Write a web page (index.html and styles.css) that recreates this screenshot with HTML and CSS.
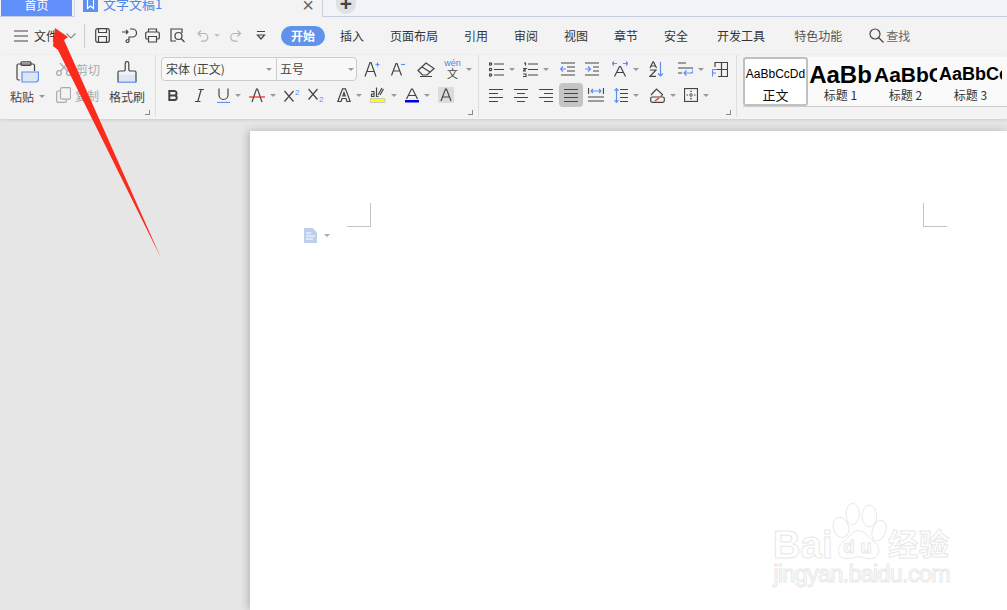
FILE: index.html
```html
<!DOCTYPE html>
<html lang="zh-CN">

<head>
    <meta charset="UTF-8">
    <title>文字文稿1</title>
    <link rel="stylesheet" href="styles.css">
</head>

<body>
    <!-- Icon sprites -->
    <svg class="sprites" width="0" height="0">
        <symbol id="i-menu" viewBox="0 0 14 12"><path d="M0 1h14M0 6h14M0 11h14"/></symbol>
        <symbol id="i-chev" viewBox="0 0 10 6"><path d="M.5.5 5 5 9.500.5"/></symbol>
        <symbol id="i-save" viewBox="0 0 15 15"><rect x=".7" y=".7" width="13.600" height="13.600" rx="2"/><path d="M3.500 1v3.500h8V1M3.500 14V8.500h8V14"/></symbol>
        <symbol id="i-smart" viewBox="0 0 15 15"><path d="M0 4h6M4 2l2 2-2 2M8 1h2.500a3.500 3.500 0 0 1 0 8H7v4a1.500 1.500 0 1 1-3 0c0-1 1-1.500 3-1.500"/></symbol>
        <symbol id="i-print" viewBox="0 0 15 15"><path d="M3.500 4V1h8v3M3.500 11H2a1.300 1.300 0 0 1-1.300-1.300V5.300A1.300 1.300 0 0 1 2 4h11a1.300 1.300 0 0 1 1.300 1.300v4.400A1.300 1.300 0 0 1 13 11h-1.500M3.500 8.500h8V14h-8z"/></symbol>
        <symbol id="i-preview" viewBox="0 0 15 15"><path d="M6 13H1V1h11v4"/><circle cx="8.500" cy="8" r="3.500"/><path d="m11 10.500 3.500 3.500"/></symbol>
        <symbol id="i-undo" viewBox="0 0 12 12"><path d="M4 .5 1 3.500l3 3M1 3.500h6a3.800 3.800 0 0 1 0 7.600H4"/></symbol>
        <symbol id="i-redo" viewBox="0 0 12 12"><path d="m8 .5 3 3-3 3M11 3.500H5a3.800 3.800 0 0 0 0 7.600h3"/></symbol>
        <symbol id="i-more" viewBox="0 0 10 9"><path d="M1 .5h8M1.500 4 5 8l3.500-4z"/></symbol>
        <symbol id="i-search" viewBox="0 0 15 15"><circle cx="6" cy="6" r="5"/><path d="m9.500 9.500 5 5"/></symbol>
        <symbol id="i-doc-tab" viewBox="0 0 15 16"><rect width="15" height="16" fill="#5b8ff0" stroke="none"/><path d="M4.500 2.500h6v10l-3-2.500-3 2.500z" stroke="#fff"/></symbol>
        <symbol id="i-paste" viewBox="0 0 23 22">
            <path d="M4 19H2.500A1.500 1.500 0 0 1 1 17.500v-13A1.500 1.500 0 0 1 2.500 3H17a1.500 1.500 0 0 1 1.500 1.500V10"/>
            <rect x="5" y=".8" width="10" height="3.500" rx="1"/>
            <path d="M6 11h16.500v7a3 3 0 0 1-3 3H6z" fill="#dfe6f3" stroke="#5b8ff0"/>
        </symbol>
        <symbol id="i-cut" viewBox="0 0 16 13"><circle cx="3" cy="10" r="2.400"/><circle cx="13" cy="10" r="2.400"/><path d="M4.500 8 12 0M11.500 8 4 0"/></symbol>
        <symbol id="i-copy" viewBox="0 0 15 16"><rect x="4.500" y=".7" width="10" height="11.500" rx="1.500"/><path d="M4 4H2A1.300 1.300 0 0 0 .7 5.300v9A1.300 1.300 0 0 0 2 15.300h7a1.300 1.300 0 0 0 1.300-1.300v-1.500"/></symbol>
        <symbol id="i-brush" viewBox="0 0 20 22">
            <path d="M1 13.500h18V21H1z" fill="#dfe6f3" stroke="none"/>
            <path d="M1 21V11.500a1.500 1.500 0 0 1 1.500-1.500H7a1.500 1.500 0 0 0 1.200-1.500V2.500a1.800 1.800 0 0 1 3.600 0v6A1.500 1.500 0 0 0 13 10h4.500a1.500 1.500 0 0 1 1.500 1.500V21"/>
            <path d="M.5 21.200h19" stroke="#5b8ff0"/>
        </symbol>
        <symbol id="i-aplus" viewBox="0 0 16 16"><path d="m1 15.500 5-14h1l5 14M3 10.500h7"/><path d="M11.500 3.500h4M13.500 1.500v4" stroke="#5b8ff0"/></symbol>
        <symbol id="i-aminus" viewBox="0 0 14 14"><path d="m.5 13.500 4.500-12h1l4.500 12M2.500 9h6.500"/><path d="M10 2.500h4" stroke="#5b8ff0"/></symbol>
        <symbol id="i-eraser" viewBox="0 0 18 15"><path d="M1 8.500 9 1l8 5.500-7 6.500H5.500z"/><path d="M5 5l8 5M3 14.500h12"/></symbol>
        <symbol id="i-bold" viewBox="0 0 11 11"><path d="M1.300 1h5a2.200 2.200 0 0 1 0 4.500h-5zm0 4.500h5.700a2.300 2.300 0 0 1 0 4.500H1.300z" stroke-width="2"/></symbol>
        <symbol id="i-italic" viewBox="0 0 9 13"><path d="M3.500.5H9M0 12.500h5.500M6.200.5l-3.400 12"/></symbol>
        <symbol id="i-under" viewBox="0 0 13 15"><path d="M2 .5v6.500a4.500 4.500 0 0 0 9 0V.5"/><path d="M0 14.500h13" stroke="#5b8ff0"/></symbol>
        <symbol id="i-strike" viewBox="0 0 16 15"><path d="m3 14 4.500-13h1L13 14"/><path d="M0 9h16" stroke="#e02b2b"/></symbol>
        <symbol id="i-sup" viewBox="0 0 16 14"><path d="m.5 3 9 10.500M9.500 3l-9 10.500"/><text x="11" y="6.500" class="sub-digit">2</text></symbol>
        <symbol id="i-sub" viewBox="0 0 16 14"><path d="m.5 1 9 10.500M9.500 1l-9 10.500"/><text x="11" y="14" class="sub-digit">2</text></symbol>
        <symbol id="i-aout" viewBox="0 0 14 14"><path d="M.8 13.500 5.500.8h3l4.700 12.700H10L9 10.500H5L4 13.500zM5.800 8h2.400L7 4.500z"/></symbol>
        <symbol id="i-mark" viewBox="0 0 16 16"><path d="M12 1 8 8M13.500 2 10 8" stroke="#444"/><rect y="11.500" width="15" height="4" rx="1" fill="#ffff00" stroke="#c9c9c9"/><path d="M1 4.500h3v5M1.500 7h2.500v2.500H1.500zM6.500.5v9h2" stroke="#444"/></symbol>
        <symbol id="i-color" viewBox="0 0 14 15"><path d="m1.500 11 5-10h1l5 10M3.500 7.500h7"/><rect y="12" width="14" height="2.500" fill="#0000e0" stroke="none"/></symbol>
        <symbol id="i-shade" viewBox="0 0 16 16"><rect width="16" height="16" fill="#dcdcdc" stroke="none"/><path d="m3 14 4.500-12h1L13 14M5 10h6"/></symbol>
        <symbol id="i-bul" viewBox="0 0 15 15"><circle cx="1.500" cy="2" r="1.200"/><circle cx="1.500" cy="7.500" r="1.200"/><circle cx="1.500" cy="13" r="1.200"/><path d="M5 2h10M5 7.500h10M5 13h10"/></symbol>
        <symbol id="i-num" viewBox="0 0 15 15"><path d="M1 1h1.500v2.500M0 6.500h3L0 9h3M0 12h3v2.500H0M5 2h10M5 7.500h10M5 13h10"/></symbol>
        <symbol id="i-dedent" viewBox="0 0 15 14"><path d="M1 1h14M7 5h8M7 9h8M1 13h14"/><path d="M6 7H.5M3 4.500.5 7 3 9.500" stroke="#5b8ff0"/></symbol>
        <symbol id="i-indent" viewBox="0 0 15 14"><path d="M0 1h14M8 5h6M8 9h6M0 13h14"/><path d="M0 7h5.500M3 4.500 5.500 7 3 9.500" stroke="#5b8ff0"/></symbol>
        <symbol id="i-ascale" viewBox="0 0 16 16"><path d="m2.500 15.500 5-10h1l5 10M4.500 11.500h7"/><path d="M0 2.500h5M2 .5l-2 2 2 2M11 2.500h5M14 .5l2 2-2 2" stroke="#5b8ff0"/></symbol>
        <symbol id="i-sort" viewBox="0 0 15 16"><path d="M1 7 4 .8h.5L7.500 7M2 5h5M1 9h6L1 15.300h6"/><path d="M11.500 1v14M9 12.500l2.500 2.500 2.500-2.500" stroke="#5b8ff0"/></symbol>
        <symbol id="i-wrap" viewBox="0 0 15 14"><path d="M0 1h8M0 6h15M0 11h4"/><path d="M15 6v3a2 2 0 0 1-2 2H6M8.500 8.500 6 11l2.500 2.500" stroke="#5b8ff0"/></symbol>
        <symbol id="i-tbl" viewBox="0 0 16 15"><path d="M3 5V.5h12.500v14H6M9.500 .5v14M3 7.500h12.500"/><path d="M.5 7.500v7M.5 7.500H5M.5 11H4" stroke="#5b8ff0"/></symbol>
        <symbol id="i-left" viewBox="0 0 14 13"><path d="M0 .5h14M0 4.500h9M0 8.500h14M0 12.500h9"/></symbol>
        <symbol id="i-center" viewBox="0 0 14 13"><path d="M0 .5h14M3 4.500h8M0 8.500h14M3 12.500h8"/></symbol>
        <symbol id="i-right" viewBox="0 0 14 13"><path d="M0 .5h14M5 4.500h9M0 8.500h14M5 12.500h9"/></symbol>
        <symbol id="i-just" viewBox="0 0 14 13"><path d="M0 .5h14M0 4.500h14M0 8.500h14M0 12.500h14"/></symbol>
        <symbol id="i-dist" viewBox="0 0 16 14"><path d="M0 9h16M0 13h16M.5 0v6M15.500 0v6"/><path d="M3 3h10M5 1 3 3l2 2M11 1l2 2-2 2" stroke="#5b8ff0"/></symbol>
        <symbol id="i-space" viewBox="0 0 14 15"><path d="M6 1.500h8M6 5.500h8M6 9.500h8M6 13.500h8"/><path d="M2.500 .5v14M.5 3l2-2.500L4.500 3M.5 12l2 2.500 2-2.500" stroke="#5b8ff0"/></symbol>
        <symbol id="i-fill" viewBox="0 0 15 15"><path d="M1 7 6.500 1l6 5.500-1.500 2"/><rect x=".7" y="9" width="13.600" height="5.300" rx="1.500"/><path d="m5 13 4-3" stroke="#e02b2b"/></symbol>
        <symbol id="i-border" viewBox="0 0 14 14"><rect x=".5" y=".5" width="13" height="13"/><path d="M7 2.500v9M2.500 7h9" stroke-dasharray="1.500 1"/></symbol>
        <symbol id="i-para" viewBox="0 0 13 15"><path d="M0 0h8.500L13 4.500V15H0z" fill="#bcd0ee" stroke="none"/><path d="M2 5h5M2 8h9M2 11h7" stroke="#fff"/></symbol>
    </svg>

    <!-- Tabs -->
    <div class="tabbar">
        <div class="tab-home">首页</div>
        <div class="tab-doc">
            <svg class="ic doc-mark" width="15" height="16"><use href="#i-doc-tab"/></svg>
            <span class="doc-name">文字文稿1</span>
            <span class="doc-close">&times;</span>
        </div>
        <div class="tab-add">+</div>
    </div>

    <!-- Menu row -->
    <div class="menubar">
        <svg class="ic" width="14" height="12"><use href="#i-menu"/></svg>
        <span class="file-btn">文件</span>
        <svg class="ic chev" width="10" height="6"><use href="#i-chev"/></svg>
        <i class="vline"></i>
        <div class="qat">
            <svg class="ic" width="15" height="15"><use href="#i-save"/></svg>
            <svg class="ic" width="15" height="15"><use href="#i-smart"/></svg>
            <svg class="ic" width="15" height="15"><use href="#i-print"/></svg>
            <svg class="ic" width="15" height="15"><use href="#i-preview"/></svg>
            <div class="tool dim"><svg class="ic" width="12" height="12"><use href="#i-undo"/></svg><i class="caret"></i></div>
            <svg class="ic dim" width="13" height="12"><use href="#i-redo"/></svg>
            <svg class="ic" width="10" height="9"><use href="#i-more"/></svg>
        </div>
        <nav class="menu-tabs">
            <span class="pill">开始</span>
            <span>插入</span>
            <span>页面布局</span>
            <span>引用</span>
            <span>审阅</span>
            <span>视图</span>
            <span>章节</span>
            <span>安全</span>
            <span class="wide">开发工具</span>
            <span class="wide">特色功能</span>
            <span class="find">
                <svg class="ic" width="15" height="15"><use href="#i-search"/></svg>
                查找
            </span>
        </nav>
    </div>

    <!-- Ribbon -->
    <div class="ribbon">
        <section class="group clip">
            <div class="big-btn paste-btn">
                <svg class="ic" width="23" height="22"><use href="#i-paste"/></svg>
                <span class="tool">粘贴<i class="caret"></i></span>
            </div>
            <div class="clip-small">
                <span class="small-btn"><svg class="ic" width="16" height="13"><use href="#i-cut"/></svg>剪切</span>
                <span class="small-btn"><svg class="ic" width="15" height="16"><use href="#i-copy"/></svg>复制</span>
            </div>
            <div class="big-btn painter-btn">
                <svg class="ic" width="20" height="22"><use href="#i-brush"/></svg>
                <span>格式刷</span>
            </div>
            <i class="launcher"></i>
        </section>

        <section class="group font">
            <div class="row">
                <div class="combo">
                    <span class="combo-face">宋体 (正文)<i class="caret"></i></span>
                    <span class="combo-size">五号<i class="caret"></i></span>
                </div>
                <div class="cells font-top">
                    <svg class="ic" width="16" height="16"><use href="#i-aplus"/></svg>
                    <svg class="ic" width="14" height="14"><use href="#i-aminus"/></svg>
                    <svg class="ic" width="18" height="15"><use href="#i-eraser"/></svg>
                    <div class="tool"><span class="pinyin"><b>wén</b>文</span><i class="caret"></i></div>
                </div>
            </div>
            <div class="cells row font-bottom">
                <svg class="ic" width="11" height="11"><use href="#i-bold"/></svg>
                <svg class="ic" width="9" height="13"><use href="#i-italic"/></svg>
                <div class="tool"><svg class="ic" width="13" height="15"><use href="#i-under"/></svg><i class="caret"></i></div>
                <div class="tool"><svg class="ic" width="16" height="15"><use href="#i-strike"/></svg><i class="caret"></i></div>
                <svg class="ic" width="16" height="14"><use href="#i-sup"/></svg>
                <svg class="ic" width="16" height="14"><use href="#i-sub"/></svg>
                <div class="tool"><svg class="ic" width="14" height="14"><use href="#i-aout"/></svg><i class="caret"></i></div>
                <div class="tool"><svg class="ic" width="16" height="16"><use href="#i-mark"/></svg><i class="caret"></i></div>
                <div class="tool"><svg class="ic" width="14" height="15"><use href="#i-color"/></svg><i class="caret"></i></div>
                <svg class="ic" width="16" height="16"><use href="#i-shade"/></svg>
            </div>
            <i class="launcher"></i>
        </section>

        <section class="group para">
            <div class="cells row para-top">
                <div class="tool"><svg class="ic" width="15" height="15"><use href="#i-bul"/></svg><i class="caret"></i></div>
                <div class="tool"><svg class="ic" width="15" height="15"><use href="#i-num"/></svg><i class="caret"></i></div>
                <svg class="ic" width="15" height="14"><use href="#i-dedent"/></svg>
                <svg class="ic" width="15" height="14"><use href="#i-indent"/></svg>
                <div class="tool"><svg class="ic" width="16" height="16"><use href="#i-ascale"/></svg><i class="caret"></i></div>
                <svg class="ic" width="15" height="16"><use href="#i-sort"/></svg>
                <div class="tool"><svg class="ic" width="15" height="14"><use href="#i-wrap"/></svg><i class="caret"></i></div>
                <svg class="ic" width="16" height="15"><use href="#i-tbl"/></svg>
            </div>
            <div class="cells row para-bottom">
                <svg class="ic" width="14" height="13"><use href="#i-left"/></svg>
                <svg class="ic" width="14" height="13"><use href="#i-center"/></svg>
                <svg class="ic" width="14" height="13"><use href="#i-right"/></svg>
                <div class="active-btn"><svg class="ic" width="14" height="13"><use href="#i-just"/></svg></div>
                <svg class="ic" width="16" height="14"><use href="#i-dist"/></svg>
                <div class="tool"><svg class="ic" width="14" height="15"><use href="#i-space"/></svg><i class="caret"></i></div>
                <div class="tool"><svg class="ic" width="15" height="15"><use href="#i-fill"/></svg><i class="caret"></i></div>
                <div class="tool"><svg class="ic" width="14" height="14"><use href="#i-border"/></svg><i class="caret"></i></div>
            </div>
            <i class="launcher"></i>
        </section>

        <section class="gallery">
            <div class="style-item selected"><span class="sample s-body">AaBbCcDd</span><span class="style-name name-body">正文</span></div>
            <div class="style-item"><span class="sample s-h1">AaBb</span><span class="style-name">标题 1</span></div>
            <div class="style-item"><span class="sample s-h2">AaBbC</span><span class="style-name">标题 2</span></div>
            <div class="style-item"><span class="sample s-h3">AaBbCc</span><span class="style-name">标题 3</span></div>
        </section>
    </div>

    <!-- Document area -->
    <main class="workspace">
        <div class="sheet">
            <i class="corner corner-l"></i>
            <i class="corner corner-r"></i>
            <div class="para-mark">
                <svg class="ic" width="13" height="15"><use href="#i-para"/></svg>
                <i class="caret"></i>
            </div>
        </div>
    </main>

    <!-- Baidu watermark -->
    <svg class="watermark" width="247" height="120" viewBox="0 0 741 360">
        <ellipse cx="278" cy="72" rx="20" ry="32"/>
        <ellipse cx="328" cy="78" rx="22" ry="33"/>
        <ellipse cx="243" cy="112" rx="23" ry="31" transform="rotate(-20 243 112)"/>
        <ellipse cx="357" cy="122" rx="20" ry="32" transform="rotate(20 357 122)"/>
        <path d="M295 122c-20 0-30 24-48 36-16 10-18 46 12 48 14 1 24-6 36-6s24 7 38 6c30-2 28-38 12-48-18-12-30-36-50-36z"/>
        <text x="38" y="204" class="wm-bai" textLength="180" lengthAdjust="spacingAndGlyphs">Bai</text>
        <text x="250" y="190" class="wm-du" textLength="85">du</text>
        <text x="384" y="196" class="wm-jy" textLength="182">经验</text>
        <text x="40" y="276" class="wm-url" textLength="532">jingyan.baidu.com</text>
    </svg>

    <!-- Red annotation arrow -->
    <svg class="arrow" width="170" height="265" viewBox="0 0 170 265">
        <polygon points="55,28 68,37 64,40 161,258 58,50 53,46"/>
    </svg>
</body>

</html>
```

FILE: styles.css
```css
* {
    box-sizing: border-box;
}

html, body {
    height: 100%;
    margin: 0;
}

body {
    position: relative;
    overflow: hidden;
    display: flex;
    flex-direction: column;
    background-color: #e6e6e6;
    color: #444;
    font-family: "Noto Sans CJK SC", "Liberation Sans", sans-serif;
    font-size: 12px;
}

.sprites {
    position: absolute;
}

.ic {
    display: block;
    flex: none;
    fill: none;
    stroke: #444;
    stroke-width: 1.2;
}

.sub-digit {
    fill: #5b8ff0;
    stroke: none;
    font-family: "Liberation Sans", sans-serif;
    font-size: 8px;
}

.caret {
    display: inline-block;
    flex: none;
    width: 0;
    height: 0;
    margin-left: 5px;
    border-top: 3px solid #999;
    border-left: 3px solid transparent;
    border-right: 3px solid transparent;
}

.tool {
    display: flex;
    align-items: center;
    white-space: nowrap;
}

.dim .ic,
.ic.dim {
    stroke: #b5b5b5;
}

.dim .caret {
    border-top-color: #c4c4c4;
}

/* Tabs */
.tabbar {
    flex: none;
    display: flex;
    height: 17px;
    padding-left: 1px;
    background-color: #f1f3f9;
    border-bottom: 1px solid #c6cde0;
}

.tab-home {
    width: 71px;
    height: 16px;
    background-color: #618ffb;
    color: #fff;
    font-size: 12px;
    line-height: 10px;
    text-align: center;
    overflow: hidden;
}

.tab-doc {
    display: flex;
    width: 249px;
    height: 17px;
    margin-left: 2px;
    padding-left: 8px;
    background-color: #f3f3f3;
    border-left: 1px solid #d5d9e6;
    border-right: 1px solid #c6cde0;
    overflow: hidden;
}

.doc-mark {
    margin-top: -4px;
}

.doc-name {
    margin-left: 5px;
    color: #4a86e8;
    font-size: 13px;
    line-height: 7px;
}

.doc-close {
    margin-left: auto;
    margin-right: 8px;
    color: #666;
    font-family: "Liberation Sans", sans-serif;
    font-size: 20px;
    line-height: 10px;
}

.tab-add {
    width: 20px;
    height: 14px;
    margin-left: 13px;
    background-color: #dfe0e4;
    border-radius: 0 0 10px 10px;
    color: #444;
    font-family: "Liberation Sans", sans-serif;
    font-size: 21px;
    font-weight: bold;
    line-height: 8px;
    text-align: center;
    overflow: hidden;
}

/* Menu row */
.menubar {
    flex: none;
    display: flex;
    align-items: center;
    height: 38px;
    padding: 0 0 1px 14px;
    background-color: #f3f3f3;
    color: #333;
}

.file-btn {
    margin-left: 6px;
    width: 32px;
}

.chev {
    stroke: #888;
}

.vline {
    width: 1px;
    height: 24px;
    margin-left: 8px;
    background-color: #ccc;
}

.qat {
    display: grid;
    grid-template-columns: 27px 23px 25px 27px 32px 27px 25px;
    align-items: center;
    margin-left: 10px;
}

.menu-tabs {
    display: flex;
    align-items: center;
    gap: 26px;
}

.pill {
    width: 44px;
    height: 20px;
    margin-right: -11px;
    background-color: #5f92ea;
    border-radius: 10px;
    color: #fff;
    font-weight: bold;
    line-height: 20px;
    text-align: center;
}

.wide {
    margin-left: 3px;
}

.find {
    display: flex;
    align-items: center;
    gap: 2px;
    margin-left: 1px;
    color: #666;
}

.wide + .wide {
    color: #555;
}

/* Ribbon */
.ribbon {
    flex: none;
    display: flex;
    height: 64px;
    background-color: #f3f3f3;
    box-shadow: 0 1px 3px rgba(0, 0, 0, 0.12);
}

.group {
    position: relative;
    height: 62px;
    border-right: 1px solid #dedede;
}

.launcher {
    position: absolute;
    right: 5px;
    bottom: 2px;
    width: 5px;
    height: 5px;
    border-right: 1px solid #888;
    border-bottom: 1px solid #888;
}

.row {
    display: flex;
    align-items: center;
    height: 26px;
}

.cells {
    display: grid;
    align-items: center;
}

/* Clipboard group */
.clip {
    display: flex;
    width: 156px;
    padding-left: 11px;
}

.big-btn {
    display: flex;
    flex-direction: column;
    align-items: center;
    padding-top: 6px;
    white-space: nowrap;
}

.big-btn > span {
    margin-top: 5px;
    line-height: 17px;
}

.paste-btn {
    width: 32px;
    padding-left: 1px;
}

.clip-small {
    margin-left: 13px;
    width: 53px;
    padding-top: 1px;
}

.small-btn {
    display: flex;
    align-items: center;
    gap: 4px;
    height: 26px;
    color: #aaa;
}

.small-btn .ic {
    stroke: #aaa;
}

.painter-btn {
    width: 36px;
}

/* Font group */
.font {
    width: 323px;
    padding: 1px 0 0 5px;
}

.combo {
    display: flex;
    width: 196px;
    height: 24px;
    background-color: #f8f8f8;
    border: 1px solid #ccc;
    border-radius: 4px;
    line-height: 22px;
}

.combo-face,
.combo-size {
    display: flex;
    align-items: center;
    justify-content: space-between;
    padding: 0 4px;
}

.combo-face {
    width: 115px;
    border-right: 1px solid #ccc;
}

.combo-size {
    flex: 1;
    padding-right: 2px;
    padding-left: 3px;
}

.font-top {
    grid-template-columns: 27px 26px 27px auto;
    margin-left: 7px;
}

.pinyin {
    display: block;
    width: 17px;
    font-size: 11px;
    line-height: 11px;
    text-align: center;
}

.pinyin b {
    display: block;
    color: #4a86e8;
    font-size: 9px;
    font-weight: normal;
    font-family: "Liberation Sans", sans-serif;
    line-height: 9px;
}

.font-bottom {
    grid-template-columns: 27px 22px 32px 35px 24px 29px 33px 35px 33px auto;
    padding-left: 7px;
}

/* Paragraph group */
.para {
    width: 258px;
    padding: 1px 0 0 10px;
}

.para-top {
    grid-template-columns: 34px 37px 25px 27px 37px 29px 34px auto;
}

.para-bottom {
    grid-template-columns: 25px 25px 20px 29px 26px 36px 34px auto;
}

.active-btn {
    display: flex;
    align-items: center;
    justify-content: center;
    width: 24px;
    height: 24px;
    background-color: #c4c4c4;
    border-radius: 4px;
}

/* Style gallery */
.gallery {
    display: flex;
    flex: 1;
    height: 50px;
    margin: 2px 0 0 6px;
    background-color: #fafafa;
    border-bottom: 1px solid #ccc;
    overflow: hidden;
}

.style-item {
    display: flex;
    flex-direction: column;
    align-items: center;
    width: 65px;
    flex: none;
    color: #333;
    overflow: hidden;
}

.selected {
    width: 65px;
    border: 2px solid #c0c0c0;
    border-radius: 3px;
    background-color: #fff;
    color: #111;
}

.sample {
    display: block;
    width: 63px;
    height: 30px;
    font-family: "Liberation Sans", sans-serif;
    font-weight: bold;
    line-height: 35px;
    color: #000;
    white-space: nowrap;
    overflow: hidden;
    text-align: center;
}

.s-body {
    font-size: 12px;
    font-weight: normal;
    line-height: 31px;
    height: 28px;
}

.s-h1 {
    font-size: 24px;
    line-height: 35px;
}

.s-h2 {
    font-size: 21px;
    text-align: left;
}

.s-h3 {
    font-size: 18px;
    text-align: left;
}

.style-name {
    line-height: 16px;
}

.name-body {
    font-size: 13px;
    color: #111;
}

/* Document area */
.workspace {
    flex: 1;
    display: flex;
    padding: 12px 0 0 250px;
    overflow: hidden;
}

.sheet {
    position: relative;
    flex: 1;
    display: flex;
    align-items: flex-start;
    justify-content: space-between;
    padding: 72px 60px 0 97px;
    background-color: #fff;
    box-shadow: -2px 0 8px rgba(0, 0, 0, 0.22);
}

.corner {
    width: 24px;
    height: 24px;
    border-bottom: 1px solid #c2c2c2;
}

.corner-l {
    border-right: 1px solid #c2c2c2;
}

.corner-r {
    border-left: 1px solid #c2c2c2;
}

.para-mark {
    position: absolute;
    top: 97px;
    left: 54px;
    display: flex;
    align-items: center;
}

.para-mark .caret {
    margin-left: 7px;
    border-top-color: #aaa;
}

/* Overlays */
.watermark {
    position: absolute;
    right: 0;
    bottom: 0;
    fill: #fff;
    stroke: #e8e8e8;
    stroke-width: 3;
}

.watermark text {
    font-family: "Liberation Sans", sans-serif;
    font-weight: bold;
}

.wm-bai {
    font-size: 118px;
}

.wm-du {
    font-size: 56px;
}

.watermark .wm-jy {
    font-family: "Noto Sans CJK SC", sans-serif;
    font-size: 90px;
}

.watermark .wm-url {
    font-size: 70px;
    font-weight: normal;
}

.arrow {
    position: absolute;
    top: 0;
    left: 0;
    fill: #fa2a1c;
}
```
